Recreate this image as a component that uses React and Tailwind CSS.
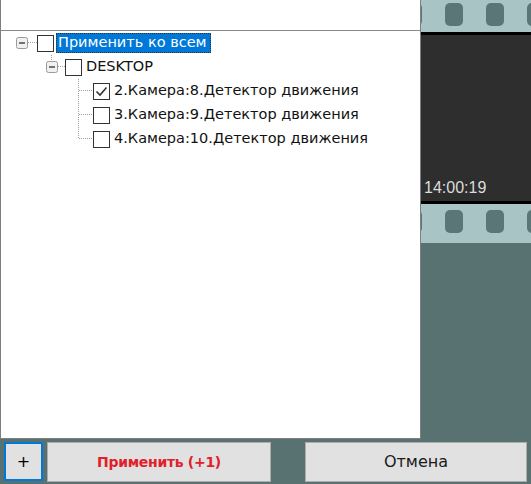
import React from 'react';

const holes = Array.from({ length: 13 }, (_, i) => i);

function Holes() {
  return holes.map((i) => (
    <div key={i} className="w-[18px] h-[23px] shrink-0 rounded-[5px] bg-[#5a7676]" />
  ));
}

function Expander({ stub }) {
  return (
    <svg width="12" height="24" className="shrink-0">
      {stub && <line x1="5.5" y1="0" x2="5.5" y2="6" stroke="#a0a0a0" strokeDasharray="1 1" />}
      <rect x="0.5" y="6.5" width="11" height="11" rx="2" fill="#f0f0f0" stroke="#9a9a9a" />
      <line x1="3" y1="12" x2="9" y2="12" stroke="#3c3c3c" strokeWidth="1.4" />
    </svg>
  );
}

function HLine({ w }) {
  return (
    <svg width={w} height="24" className="shrink-0">
      <line x1="0" y1="11.5" x2={w} y2="11.5" stroke="#a0a0a0" strokeDasharray="1 1" />
    </svg>
  );
}

function ChildLine({ last }) {
  return (
    <svg width="15" height="24" className="shrink-0">
      <line x1="0.5" y1="0" x2="0.5" y2={last ? 12 : 24} stroke="#a0a0a0" strokeDasharray="1 1" />
      <line x1="1" y1="11.5" x2="15" y2="11.5" stroke="#a0a0a0" strokeDasharray="1 1" />
    </svg>
  );
}

function Check({ checked }) {
  return (
    <div className="w-[17px] h-[17px] shrink-0 border border-[#333] bg-white flex items-center justify-center">
      {checked && (
        <svg width="13" height="13" viewBox="0 0 13 13">
          <path d="M1.5 6.5 L5 10 L11.5 2.5" fill="none" stroke="#333" strokeWidth="1.6" />
        </svg>
      )}
    </div>
  );
}

const cameras = [
  { label: '2.Камера:8.Детектор движения', checked: true },
  { label: '3.Камера:9.Детектор движения' },
  { label: '4.Камера:10.Детектор движения' },
];

export default function App() {
  return (
    <div className="relative w-[531px] h-[484px] overflow-hidden bg-[#587171] font-['DejaVu_Sans',sans-serif]">
      {/* video strip behind the popup */}
      <div className="flex flex-col">
        <div className="h-[32px] bg-[#a9c4c4] flex pl-[35px] gap-[23px] pt-[3px]">
          <Holes />
        </div>
        <div className="h-[3px] bg-black" />
        <div className="h-[166px] bg-[#2e2e2e] flex items-end pl-[424px] pb-[5px]">
          <span className="font-['Liberation_Sans',sans-serif] text-[16px] leading-none text-[#dcdcdc]">14:00:19</span>
        </div>
        <div className="h-[3px] bg-black" />
        <div className="h-[39px] bg-[#a9c4c4] flex pl-[35px] gap-[23px] pt-[6px]">
          <Holes />
        </div>
      </div>

      {/* dropdown popup */}
      <div className="absolute inset-0 flex flex-col">
        <div className="w-[421px] h-[439px] bg-white border-x border-b border-[#7f7f7f] flex flex-col">
          <div className="h-[31px] border-b border-[#8a8a8a] shrink-0" />
          <div className="flex flex-col text-[14.5px] text-[#111]">
            <div className="h-[24px] flex items-center pl-[15px]">
              <Expander />
              <HLine w={9} />
              <Check />
              <span className="ml-[2px] h-[20px] pl-[2px] pr-[4px] flex items-center bg-[#0078d7] text-white outline-1 outline-dotted outline-[#333] -outline-offset-1">
                Применить ко всем
              </span>
            </div>
            <div className="h-[24px] flex items-center pl-[45px]">
              <Expander stub />
              <HLine w={7} />
              <Check />
              <span className="ml-[4px]">DESKTOP</span>
            </div>
            {cameras.map((c, i) => (
              <div key={c.label} className="h-[24px] flex items-center pl-[77px]">
                <ChildLine last={i === cameras.length - 1} />
                <Check checked={c.checked} />
                <span className="ml-[4px]">{c.label}</span>
              </div>
            ))}
          </div>
        </div>

        <div className="flex mt-[3px] h-[40px]">
          <button className="ml-[4px] w-[39px] h-[39px] border-2 border-[#0078d7] bg-[#e1e1e1] text-[16px] text-black flex items-center justify-center">
            +
          </button>
          <button className="ml-[4px] w-[224px] h-[40px] border border-[#adadad] bg-[#e1e1e1] text-[14px] tracking-[-0.3px] font-bold text-[#e0202a] flex items-center justify-center">
            Применить (+1)
          </button>
          <button className="ml-[34px] w-[222px] h-[40px] border border-[#adadad] bg-[#e1e1e1] text-[16px] text-[#1a1a1a] flex items-center justify-center">
            Отмена
          </button>
        </div>
      </div>
    </div>
  );
}
